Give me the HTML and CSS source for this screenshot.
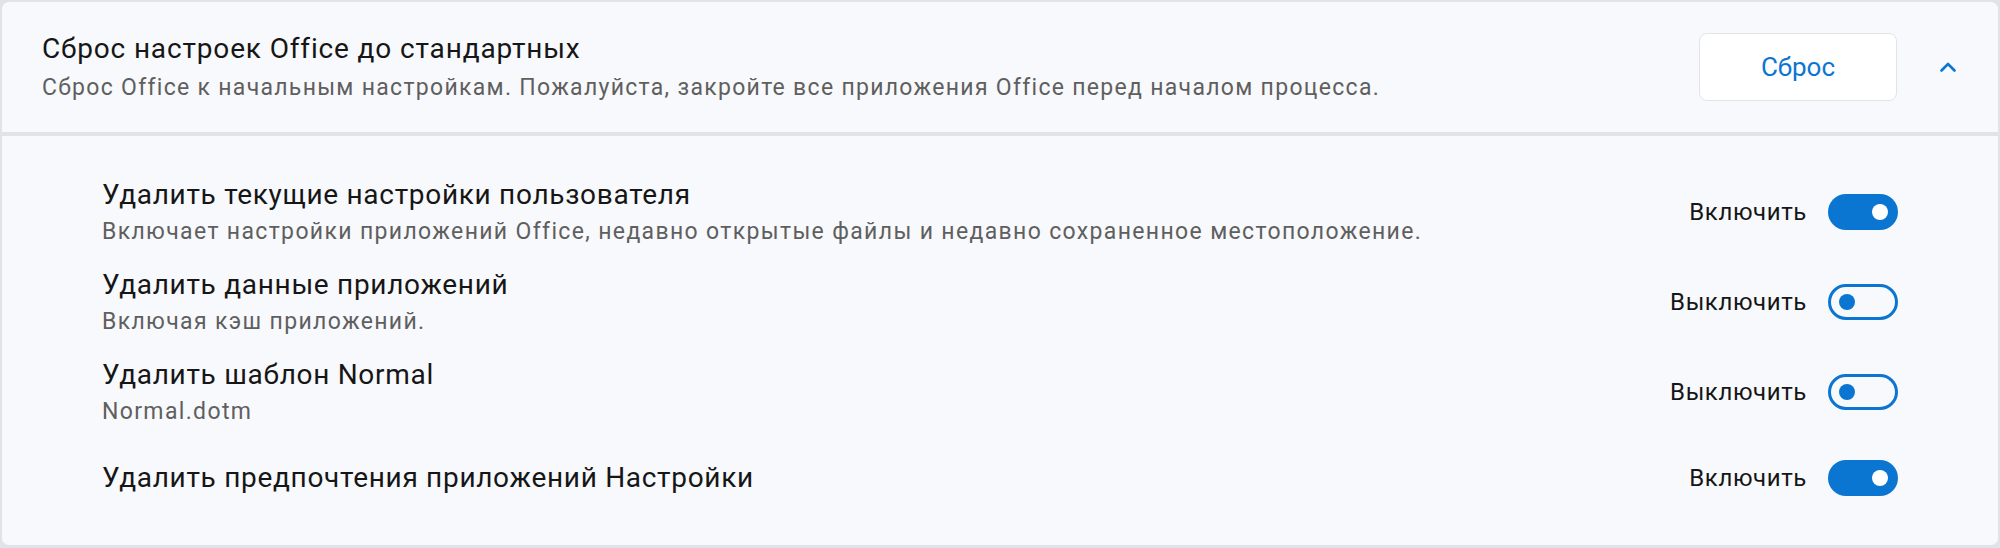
FILE: index.html
```html
<!DOCTYPE html>
<html lang="ru">
<head>
<meta charset="utf-8">
<title>Сброс настроек Office</title>
<link rel="stylesheet" href="styles.css">
</head>
<body>
<div class="panel">
  <section class="header-card">
    <div class="header-text">
      <div class="header-title">Сброс настроек Office до стандартных</div>
      <div class="header-desc">Сброс Office к начальным настройкам. Пожалуйста, закройте все приложения Office перед началом процесса.</div>
    </div>
    <button class="btn" type="button">Сброс</button>
    <span class="chevron">
      <svg width="16" height="10" viewBox="0 0 16 10"><polyline points="1.5,8.5 8,2 14.5,8.5" fill="none" stroke="#0b76d1" stroke-width="2.6" stroke-linecap="round" stroke-linejoin="round"/></svg>
    </span>
  </section>
  <section class="content-card">
    <div class="row">
      <div class="row-text">
        <div class="row-title">Удалить текущие настройки пользователя</div>
        <div class="row-desc">Включает настройки приложений Office, недавно открытые файлы и недавно сохраненное местоположение.</div>
      </div>
      <div class="row-ctrl">
        <span class="label">Включить</span>
        <span class="toggle on"><span class="knob"></span></span>
      </div>
    </div>
    <div class="row">
      <div class="row-text">
        <div class="row-title">Удалить данные приложений</div>
        <div class="row-desc">Включая кэш приложений.</div>
      </div>
      <div class="row-ctrl">
        <span class="label">Выключить</span>
        <span class="toggle off"><span class="knob"></span></span>
      </div>
    </div>
    <div class="row">
      <div class="row-text">
        <div class="row-title">Удалить шаблон Normal</div>
        <div class="row-desc">Normal.dotm</div>
      </div>
      <div class="row-ctrl">
        <span class="label">Выключить</span>
        <span class="toggle off"><span class="knob"></span></span>
      </div>
    </div>
    <div class="row row-last">
      <div class="row-text">
        <div class="row-title">Удалить предпочтения приложений Настройки</div>
      </div>
      <div class="row-ctrl">
        <span class="label">Включить</span>
        <span class="toggle on"><span class="knob"></span></span>
      </div>
    </div>
  </section>
</div>
</body>
</html>
```
FILE: styles.css
```css
html, body {
  margin: 0;
  padding: 0;
}
body {
  background: #e2e3e8;
  font-family: Roboto, "Noto Sans", sans-serif;
  color: #1b1b1b;
  width: 2000px;
  height: 548px;
  overflow: hidden;
}
.panel {
  padding: 2px 2px 3px 2px;
  display: flex;
  flex-direction: column;
  gap: 4px;
}
.header-card {
  background: #f8f9fc;
  border-radius: 7px 7px 0 0;
  height: 130px;
  box-sizing: border-box;
  display: flex;
  align-items: center;
  padding: 0 42px 0 40px;
}
.header-text {
  flex: 1;
}
.header-title {
  font-size: 28px;
  line-height: 36px;
  letter-spacing: 0.85px;
  color: #161616;
}
.header-desc {
  font-size: 23px;
  line-height: 30px;
  letter-spacing: 1.3px;
  margin-top: 6px;
  color: #5f5f5f;
}
.btn {
  width: 198px;
  height: 68px;
  background: #ffffff;
  border: 1.5px solid #e2e3e7;
  border-radius: 8px;
  color: #0b76d1;
  font-family: Roboto, "Noto Sans", sans-serif;
  font-size: 26px;
  padding: 0;
}
.chevron {
  margin-left: 43px;
  width: 16px;
  height: 10px;
  display: flex;
}
.content-card {
  background: #f8f9fc;
  border-radius: 0 0 7px 7px;
  height: 409px;
  box-sizing: border-box;
  padding: 31px 100px 26px 100px;
}
.row {
  height: 90px;
  display: flex;
  align-items: center;
}
.row-last {
  height: 82px;
}
.row-text {
  flex: 1;
}
.row-title {
  font-size: 28px;
  line-height: 36px;
  letter-spacing: 0.7px;
  color: #161616;
}
.row-desc {
  font-size: 23px;
  line-height: 30px;
  letter-spacing: 1.35px;
  margin-top: 4px;
  color: #5f5f5f;
}
.row-ctrl {
  display: flex;
  align-items: center;
  gap: 21px;
}
.label {
  font-size: 24px;
  letter-spacing: 0.6px;
  color: #161616;
}
.toggle {
  width: 70px;
  height: 36px;
  box-sizing: border-box;
  border-radius: 18px;
  display: flex;
  align-items: center;
}
.toggle .knob {
  width: 16px;
  height: 16px;
  border-radius: 50%;
}
.toggle.on {
  background: #0b76d1;
  justify-content: flex-end;
  padding-right: 10px;
}
.toggle.on .knob {
  background: #ffffff;
}
.toggle.off {
  border: 3px solid #0b76d1;
  padding-left: 8px;
}
.toggle.off .knob {
  background: #0b76d1;
}
```
